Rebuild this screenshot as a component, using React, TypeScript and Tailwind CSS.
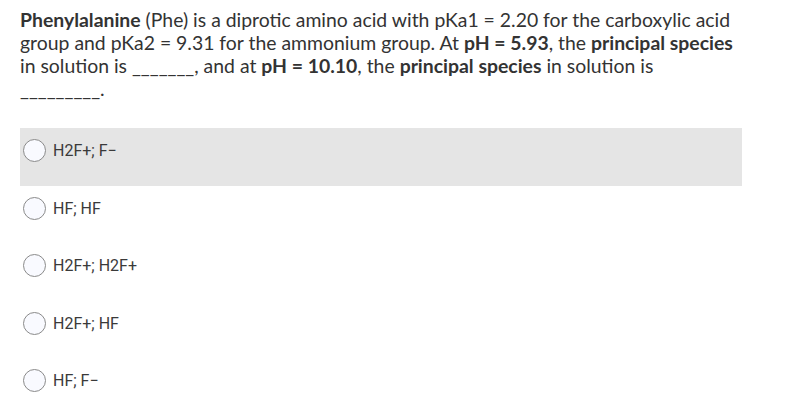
import React from 'react';

const OPTIONS = ['H2F+; F−', 'HF; HF', 'H2F+; H2F+', 'H2F+; HF', 'HF; F−'];

const App: React.FC = () => {
  return (
    <div className="w-[787px] h-[418px] bg-white pl-[20px] pt-[8px]">
      {/* Question */}
      <p className="w-[719px] font-['Lato','Liberation_Sans',sans-serif] text-[19.4px] leading-[23px] text-[#333]">
        <b>Phenylalanine</b> (Phe) is a diprotic amino acid with pKa1 = 2.20 for the carboxylic acid group and pKa2 = 9.31 for
        the ammonium group. At <b>pH = 5.93</b>, the <b>principal species</b> in solution is _______, and at{' '}
        <b>pH = 10.10</b>, the <b>principal species</b> in solution is _________.
      </p>

      {/* Options */}
      <div className="mt-[28px] w-[722px]">
        {OPTIONS.map((opt, i) => (
          <div key={opt} className={`h-[57.5px] flex items-start pt-[11px] pl-[3px] ${i === 0 ? 'bg-[#e5e5e5]' : ''}`}>
            <span className="w-[23px] h-[23px] rounded-full border border-[#8a8a8a] bg-[#f9faff] shrink-0" />
            <span className="ml-[7px] mt-[1px] font-['Roboto','Liberation_Sans',sans-serif] text-[16px] leading-[22px] text-[#3a3a3a]">
              {opt}
            </span>
          </div>
        ))}
      </div>
    </div>
  );
};

export default App;
